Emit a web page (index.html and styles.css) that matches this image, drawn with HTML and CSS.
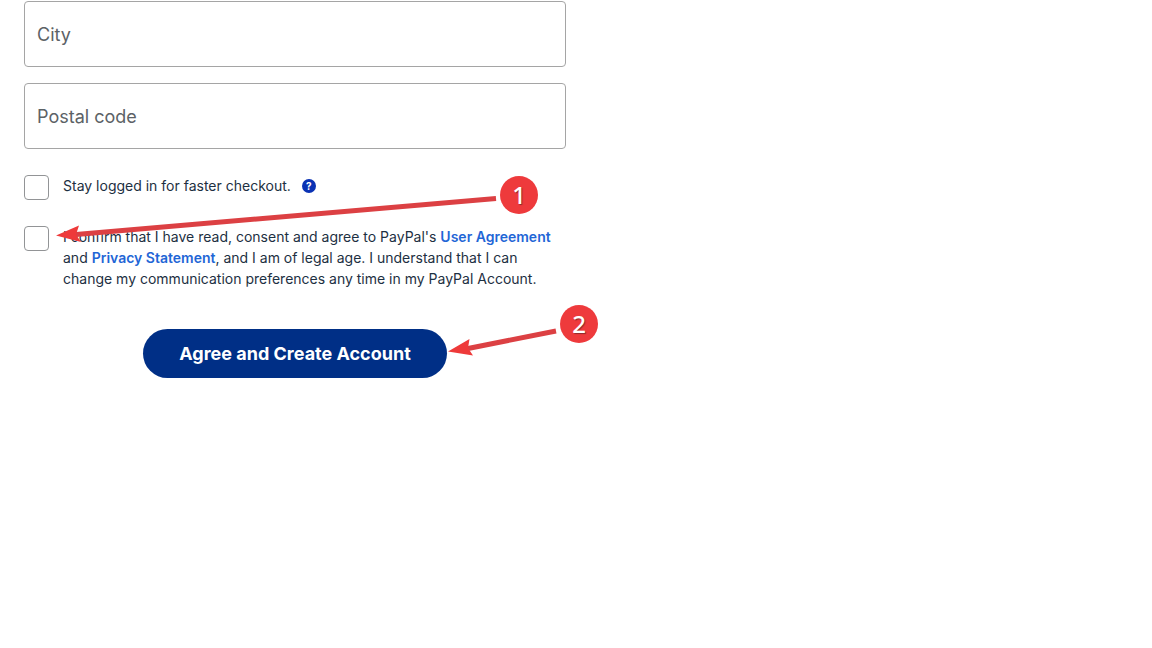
FILE: index.html
```html
<!DOCTYPE html>
<html lang="en">
<head>
    <meta charset="UTF-8">
    <meta name="viewport" content="width=device-width, initial-scale=1.0">
    <title>PayPal - Create Account</title>
    <link rel="stylesheet" href="styles.css">
</head>
<body>

    <main class="signup">
        <form class="signup-form">
            <input class="field" type="text" name="city" placeholder="City" aria-label="City">
            <input class="field" type="text" name="postal" placeholder="Postal code" aria-label="Postal code">

            <div class="option">
                <input class="checkbox" type="checkbox" id="stay-logged-in">
                <div class="option-text">
                    <label for="stay-logged-in">Stay logged in for faster checkout.</label>
                    <button type="button" class="help">?</button>
                </div>
            </div>

            <div class="option">
                <input class="checkbox" type="checkbox" id="agree">
                <label class="option-text" for="agree">I confirm that I have read, consent and agree to PayPal's <a href="#">User Agreement</a> and <a href="#">Privacy Statement</a>, and I am of legal age. I understand that I can change my communication preferences any time in my PayPal Account.</label>
            </div>

            <button type="submit" class="submit">Agree and Create Account</button>
        </form>

        <!-- Step markers -->
        <svg class="arrows" width="620" height="400" viewBox="0 0 620 400" aria-hidden="true">
            <path class="arrow-line" d="M496 198.500L76 234.500"/>
            <path class="arrow-head" d="M56 235.500L79 225.500L76 234.500L81 242Z"/>
            <path class="arrow-line" d="M556 331L468 348.500"/>
            <path class="arrow-head" d="M448 351.500L469.500 339L468 348L473 355.500Z"/>
        </svg>
        <span class="step step-one">1</span>
        <span class="step step-two">2</span>
    </main>

</body>
</html>
```

FILE: styles.css
```css
* {
    box-sizing: border-box;
}
body {
    margin: 0;
    background-color: #ffffff;
    color: #1d3042;
    font-family: Inter, "Liberation Sans", sans-serif;
    font-size: 14px;
    line-height: 21px;
}
.signup {
    position: relative;
    padding: 1px 24px;
}
.signup-form {
    display: flex;
    flex-direction: column;
    max-width: 542px;
}
.field {
    width: 100%;
    height: 66px;
    margin-bottom: 16px;
    padding: 0 12px;
    border: 1px solid #a5a5a5;
    border-radius: 4px;
    background-color: #ffffff;
    color: #1d3042;
    font-family: inherit;
    font-size: 18px;
}
.field::placeholder {
    color: #5c6266;
    opacity: 1;
}
.option {
    display: flex;
    align-items: flex-start;
    gap: 14px;
    margin-top: 10px;
    margin-bottom: 16px;
}
.checkbox {
    appearance: none;
    flex: none;
    width: 25px;
    height: 25px;
    margin: 0;
    border: 1px solid #929496;
    border-radius: 4px;
    background-color: #ffffff;
}
.checkbox:checked {
    background-color: #0a5bd8;
}
.option-text {
    padding-right: 12px;
}
.option-text a {
    color: #1f66d6;
    font-weight: 600;
    text-decoration: none;
}
.option-text a:hover {
    text-decoration: underline;
}
.help {
    width: 14px;
    height: 14px;
    margin-left: 7px;
    padding: 0;
    border: none;
    border-radius: 50%;
    background-color: #0a32b4;
    color: #ffffff;
    font-family: inherit;
    font-size: 10px;
    font-weight: 700;
    line-height: 14px;
    vertical-align: 1px;
}
.submit {
    align-self: center;
    height: 49px;
    margin-top: 24px;
    padding: 0 36px;
    border: none;
    border-radius: 25px;
    background-color: #002f86;
    color: #ffffff;
    font-family: inherit;
    font-size: 18px;
    font-weight: 700;
    cursor: pointer;
}
.arrows {
    position: absolute;
    top: 0;
    left: 0;
    pointer-events: none;
}
.arrow-line {
    fill: none;
    stroke: #dc4043;
    stroke-width: 5;
}
.arrow-head {
    fill: #ee3a3a;
}
.step {
    position: absolute;
    width: 38px;
    height: 38px;
    border-radius: 50%;
    background-color: #ee3a3c;
    color: #ffffff;
    font-family: "Noto Sans", "Liberation Sans", sans-serif;
    font-size: 24px;
    font-weight: 500;
    line-height: 38px;
    text-align: center;
    text-shadow: 1px 1px 1px #8c2a2a;
}
.step-one {
    top: 176px;
    left: 500px;
}
.step-two {
    top: 305px;
    left: 560px;
}
```
